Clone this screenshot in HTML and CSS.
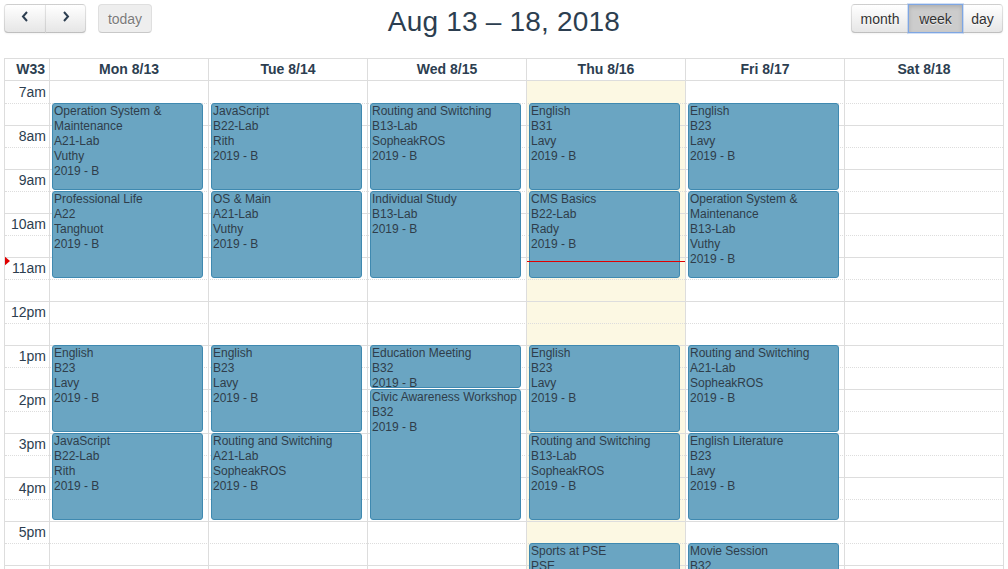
FILE: index.html
```html
<!DOCTYPE html>
<html>
<head>
<meta charset="utf-8">
<link rel="stylesheet" href="styles.css">
</head>
<body>
<div class="cal">
  <div class="toolbar">
    <div class="tb-left">
      <div class="btn-group">
        <button class="btn btn-nav btn-prev btn-first" type="button"><svg width="8" height="11" viewBox="0 0 8 11"><path d="M6 1 L2 5.5 L6 10" fill="none" stroke="#2c3e50" stroke-width="2"/></svg></button>
        <button class="btn btn-nav btn-next btn-last" type="button"><svg width="8" height="11" viewBox="0 0 8 11"><path d="M2 1 L6 5.5 L2 10" fill="none" stroke="#2c3e50" stroke-width="2"/></svg></button>
      </div>
      <button class="btn btn-today" type="button">today</button>
    </div>
    <h2 class="title">Aug 13 – 18, 2018</h2>
    <div class="tb-right">
      <div class="btn-group">
        <button class="btn btn-month btn-first" type="button">month</button>
        <button class="btn btn-week btn-active" type="button">week</button>
        <button class="btn btn-day btn-last" type="button">day</button>
      </div>
    </div>
  </div>

  <div class="view">
    <div class="head">
      <div class="hcell hcell-axis">W33</div>
      <div class="hcell">Mon 8/13</div>
      <div class="hcell">Tue 8/14</div>
      <div class="hcell">Wed 8/15</div>
      <div class="hcell">Thu 8/16</div>
      <div class="hcell">Fri 8/17</div>
      <div class="hcell hcell-last">Sat 8/18</div>
    </div>

    <div class="body">
      <div class="bg">
        <div class="bgcol"></div>
        <div class="bgcol"></div>
        <div class="bgcol"></div>
        <div class="bgcol"></div>
        <div class="bgcol bgcol-today"></div>
        <div class="bgcol"></div>
        <div class="bgcol bgcol-last"></div>
      </div>

      <div class="slots">
        <div class="slot slot-first"><div class="axis">7am</div></div>
        <div class="slot slot-minor"><div class="axis"></div></div>
        <div class="slot"><div class="axis">8am</div></div>
        <div class="slot slot-minor"><div class="axis"></div></div>
        <div class="slot"><div class="axis">9am</div></div>
        <div class="slot slot-minor"><div class="axis"></div></div>
        <div class="slot"><div class="axis">10am</div></div>
        <div class="slot slot-minor"><div class="axis"></div></div>
        <div class="slot"><div class="axis">11am</div></div>
        <div class="slot slot-minor"><div class="axis"></div></div>
        <div class="slot"><div class="axis">12pm</div></div>
        <div class="slot slot-minor"><div class="axis"></div></div>
        <div class="slot"><div class="axis">1pm</div></div>
        <div class="slot slot-minor"><div class="axis"></div></div>
        <div class="slot"><div class="axis">2pm</div></div>
        <div class="slot slot-minor"><div class="axis"></div></div>
        <div class="slot"><div class="axis">3pm</div></div>
        <div class="slot slot-minor"><div class="axis"></div></div>
        <div class="slot"><div class="axis">4pm</div></div>
        <div class="slot slot-minor"><div class="axis"></div></div>
        <div class="slot"><div class="axis">5pm</div></div>
        <div class="slot slot-minor"><div class="axis"></div></div>
        <div class="slot"><div class="axis">6pm</div></div>
        <div class="slot slot-minor"><div class="axis"></div></div>
        <div class="slot"><div class="axis">7pm</div></div>
        <div class="slot slot-minor"><div class="axis"></div></div>
        <div class="slot"><div class="axis">8pm</div></div>
        <div class="slot slot-minor"><div class="axis"></div></div>
      </div>

      <div class="events">
        <div class="ecol ecol-axis"></div>

        <div class="ecol">
          <div class="event" style="top:22px;height:87px">Operation System &amp; Maintenance<br>A21-Lab<br>Vuthy<br>2019 - B</div>
          <div class="event" style="top:110px;height:87px">Professional Life<br>A22<br>Tanghuot<br>2019 - B</div>
          <div class="event" style="top:264px;height:87px">English<br>B23<br>Lavy<br>2019 - B</div>
          <div class="event" style="top:352px;height:87px">JavaScript<br>B22-Lab<br>Rith<br>2019 - B</div>
        </div>

        <div class="ecol">
          <div class="event" style="top:22px;height:87px">JavaScript<br>B22-Lab<br>Rith<br>2019 - B</div>
          <div class="event" style="top:110px;height:87px">OS &amp; Main<br>A21-Lab<br>Vuthy<br>2019 - B</div>
          <div class="event" style="top:264px;height:87px">English<br>B23<br>Lavy<br>2019 - B</div>
          <div class="event" style="top:352px;height:87px">Routing and Switching<br>A21-Lab<br>SopheakROS<br>2019 - B</div>
        </div>

        <div class="ecol">
          <div class="event" style="top:22px;height:87px">Routing and Switching<br>B13-Lab<br>SopheakROS<br>2019 - B</div>
          <div class="event" style="top:110px;height:87px">Individual Study<br>B13-Lab<br>2019 - B</div>
          <div class="event" style="top:264px;height:43px">Education Meeting<br>B32<br>2019 - B</div>
          <div class="event" style="top:308px;height:131px">Civic Awareness Workshop<br>B32<br>2019 - B</div>
        </div>

        <div class="ecol">
          <div class="event" style="top:22px;height:87px">English<br>B31<br>Lavy<br>2019 - B</div>
          <div class="event" style="top:110px;height:87px">CMS Basics<br>B22-Lab<br>Rady<br>2019 - B</div>
          <div class="event" style="top:264px;height:87px">English<br>B23<br>Lavy<br>2019 - B</div>
          <div class="event" style="top:352px;height:87px">Routing and Switching<br>B13-Lab<br>SopheakROS<br>2019 - B</div>
          <div class="event" style="top:462px;height:87px">Sports at PSE<br>PSE<br>2019 - B</div>
          <div class="now-line" style="top:180px"></div>
        </div>

        <div class="ecol">
          <div class="event" style="top:22px;height:87px">English<br>B23<br>Lavy<br>2019 - B</div>
          <div class="event" style="top:110px;height:87px">Operation System &amp; Maintenance<br>B13-Lab<br>Vuthy<br>2019 - B</div>
          <div class="event" style="top:264px;height:87px">Routing and Switching<br>A21-Lab<br>SopheakROS<br>2019 - B</div>
          <div class="event" style="top:352px;height:87px">English Literature<br>B23<br>Lavy<br>2019 - B</div>
          <div class="event" style="top:462px;height:87px">Movie Session<br>B32<br>2019 - B</div>
        </div>

        <div class="ecol"></div>
      </div>

      <div class="now-arrow" style="top:175px"></div>
    </div>
  </div>
</div>
</body>
</html>
```

FILE: styles.css
```css
html, body {
  margin: 0;
  padding: 0;
  overflow: hidden;
  background: #fff;
}

body {
  font-family: "Liberation Sans", Arial, sans-serif;
  font-size: 14px;
  color: #2c3e50;
  width: 1008px;
  height: 569px;
}

.cal {
  padding: 4px 0 0 4px;
  width: 1000px;
}

/* ---------- toolbar ---------- */
.toolbar {
  display: grid;
  grid-template-columns: 1fr auto 1fr;
  align-items: start;
  height: 29px;
  margin-bottom: 25px;
}

.tb-left {
  display: flex;
  gap: 12px;
  justify-self: start;
}

.tb-right {
  justify-self: end;
  padding-right: 1px;
}

.btn-group {
  display: flex;
}

.title {
  margin: 0;
  padding-top: 3px;
  font-size: 28px;
  font-weight: normal;
  line-height: 29px;
  letter-spacing: 0.2px;
  color: #2c3e50;
  white-space: nowrap;
}

.btn {
  height: 29px;
  padding: 0;
  margin: 0;
  font-family: "Liberation Sans", Arial, sans-serif;
  font-size: 14px;
  color: #333;
  background-color: #f5f5f5;
  background-image: linear-gradient(to bottom, #ffffff, #e6e6e6);
  border: 1px solid;
  border-color: #e6e6e6 #e6e6e6 #bfbfbf;
  border-color: rgba(0,0,0,.1) rgba(0,0,0,.1) rgba(0,0,0,.25);
  box-shadow: inset 0 1px 0 rgba(255,255,255,.2), 0 1px 2px rgba(0,0,0,.05);
  text-shadow: 0 1px 1px rgba(255,255,255,.75);
  border-radius: 0;
  cursor: pointer;
}

.btn-group .btn + .btn {
  margin-left: -1px;
}

.btn-first {
  border-radius: 4px 0 0 4px;
}

.btn-last {
  border-radius: 0 4px 4px 0;
}

.btn-nav {
  display: flex;
  align-items: center;
  justify-content: center;
  padding: 0 0 4px 0;
}

.btn-prev {
  width: 42px;
}

.btn-next {
  width: 41px;
}

.btn-month {
  width: 58px;
}

.btn-week {
  width: 55px;
}

.btn-day {
  width: 41px;
}

.btn-nav svg {
  display: block;
}

.btn-today {
  width: 54px;
  border-radius: 4px;
  opacity: .65;
  box-shadow: none;
  color: #333;
  background-image: none;
  background-color: #e6e6e6;
  cursor: default;
}

.btn-active {
  background-image: none;
  background-color: #cccccc;
  border-color: #7ea6e3;
  box-shadow: inset 0 2px 4px rgba(0,0,0,.15), 0 0 0 1px rgba(126,166,227,.35);
  position: relative;
  z-index: 1;
}

/* ---------- view ---------- */
.view {
  width: 1000px;
  box-sizing: border-box;
  border: 1px solid #ddd;
  border-bottom: none;
}

.head {
  display: grid;
  grid-template-columns: 45px repeat(5, 159px) 158px;
  height: 22px;
}

.hcell {
  box-sizing: border-box;
  border-right: 1px solid #ddd;
  border-bottom: 1px solid #ddd;
  font-weight: bold;
  text-align: center;
  line-height: 21px;
  color: #2c3e50;
  white-space: nowrap;
}

.hcell-axis {
  text-align: right;
  padding-right: 4px;
}

.hcell-last {
  border-right: none;
}

.body {
  position: relative;
  height: 500px;
  overflow: hidden;
}

.bg,
.events {
  position: absolute;
  inset: 0;
  display: grid;
  grid-template-columns: 45px repeat(5, 159px) 158px;
}

.bg {
  z-index: 0;
}

.bgcol {
  box-sizing: border-box;
  border-right: 1px solid #ddd;
}

.bgcol-today {
  background: #fcf8e3;
}

.bgcol-last {
  border-right: none;
}

.slots {
  position: relative;
  z-index: 1;
}

.slot {
  box-sizing: border-box;
  height: 22px;
  border-top: 1px solid #ddd;
  display: flex;
}

.slot-first {
  border-top-color: transparent;
}

.slot-minor {
  border-top-style: dotted;
}

.axis {
  width: 45px;
  box-sizing: border-box;
  padding-right: 4px;
  text-align: right;
  line-height: 21px;
  color: #2c3e50;
  white-space: nowrap;
}

.events {
  z-index: 2;
}

.ecol {
  position: relative;
}

.event {
  position: absolute;
  left: 2px;
  right: 6px;
  box-sizing: border-box;
  background: #6aa5c2;
  border: 1px solid #3f89b0;
  border-radius: 3px;
  padding: 0 1px;
  overflow: hidden;
  font-size: 12px;
  line-height: 15px;
  color: #2f3d4a;
}

.now-line {
  position: absolute;
  left: 0;
  right: 1px;
  height: 0;
  border-top: 1px solid #e00000;
  z-index: 3;
}

.now-arrow {
  position: absolute;
  left: -1px;
  width: 0;
  height: 0;
  border-style: solid;
  border-width: 5px 0 5px 6px;
  border-color: transparent transparent transparent #e00000;
  z-index: 3;
}
```
